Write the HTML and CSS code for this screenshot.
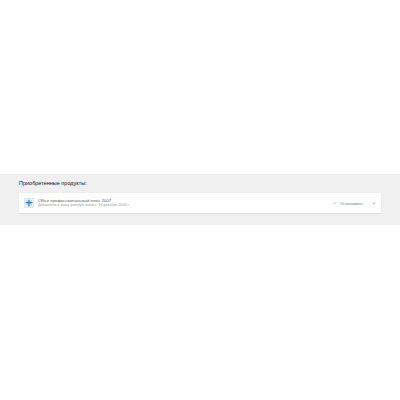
FILE: index.html
```html
<!DOCTYPE html>
<html lang="ru">
<head>
<meta charset="utf-8">
<title>Приобретенные продукты</title>
<link rel="stylesheet" href="styles.css">
</head>
<body>
<main class="page">
  <section class="band">
    <h2 class="heading">Приобретенные продукты:</h2>
    <div class="card">
      <svg class="logo" viewBox="0 0 12 12" aria-hidden="true">
        <rect x="0.5" y="0.5" width="11" height="11" fill="#f2f7fb" stroke="#c5d9e8" stroke-width="0.7"/>
        <rect x="2.4" y="2.8" width="7.2" height="6.4" fill="#bcd8ec"/>
        <path d="M6 1.8V10.2M1.8 5.6H10.2" stroke="#1f6aa5" stroke-width="1.1"/>
      </svg>
      <div class="info">
        <div class="name">Office профессиональный плюс 2007</div>
        <div class="meta">Добавлено в вашу учетную запись: 18 декабря 2009 г.</div>
      </div>
      <a class="install" href="#">
        <svg class="dl" viewBox="0 0 6 6" aria-hidden="true"><path d="M1 2.5L2.5 4.5L5 1.5" fill="none" stroke="#8fb3cc" stroke-width="0.9"/></svg>
        <span>Установить</span>
      </a>
      <svg class="chev" viewBox="0 0 6 4" aria-hidden="true"><path d="M0.8 0.8L3 3L5.2 0.8" fill="none" stroke="#666" stroke-width="0.7"/></svg>
    </div>
  </section>
</main>
</body>
</html>
```
FILE: styles.css
```css
html, body { margin: 0; padding: 0; background: #fff; }
body { font-family: "Liberation Sans", Arial, sans-serif; }
.page { padding-top: 174px; height: 226px; }
.band { background: #f0f0f0; height: 51px; padding: 6px 19px 0; box-sizing: border-box; }
.heading { margin: 0 0 7px; font-size: 5.5px; line-height: 6px; font-weight: 400; color: #111; }
.card { display: flex; align-items: center; height: 20px; padding: 0 5px; background: #fff; border-radius: 1px; box-shadow: 0 0.5px 1.5px rgba(0,0,0,.08); }
.logo { width: 10px; height: 10px; margin-right: 4px; flex: none; }
.info { flex: 1; min-width: 0; }
.name { font-size: 4.25px; line-height: 5.5px; color: #666; }
.meta { font-size: 3.65px; line-height: 5px; color: #999; }
.install { display: flex; align-items: center; gap: 3px; font-size: 4.4px; color: #5d86a6; text-decoration: none; margin-right: 9px; }
.dl { width: 4px; height: 4px; }
.chev { width: 4px; height: 3px; flex: none; }
```
